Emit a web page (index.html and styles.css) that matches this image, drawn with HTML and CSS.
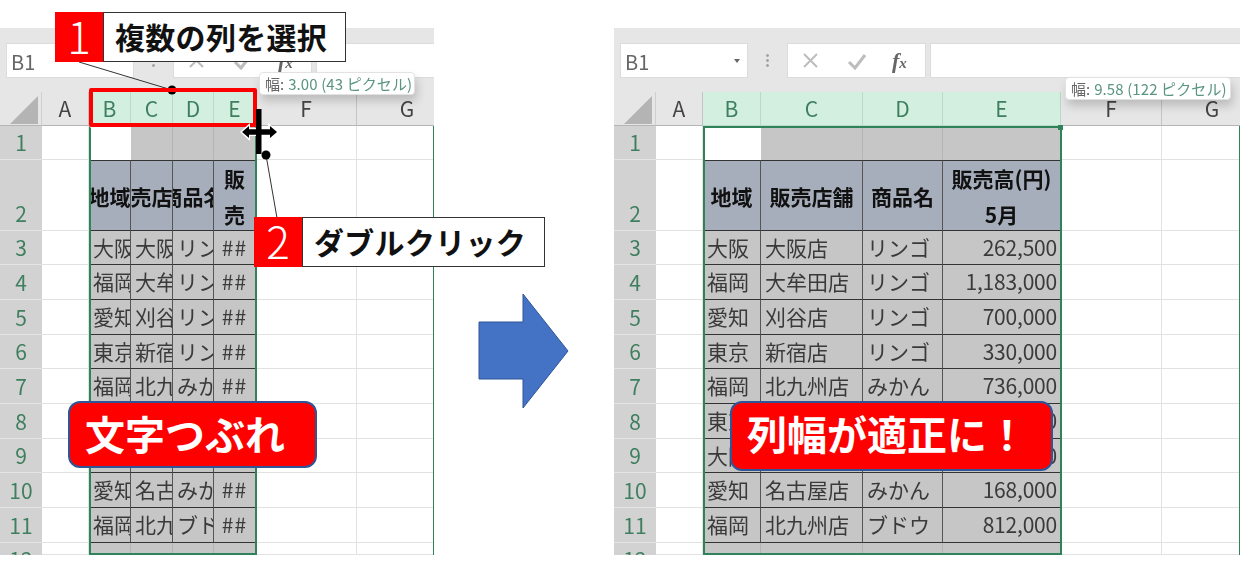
FILE: index.html
```html
<!DOCTYPE html>
<html lang="ja">
<head>
    <meta charset="UTF-8">
    <title>複数の列を選択してダブルクリック</title>
    <link rel="stylesheet" href="styles.css">
</head>
<body>

    <!-- before -->
    <div class="sheet sheet-a">
        <div class="toolbar">
            <div class="namebox">B1</div>
            <div class="kebab"></div>
            <div class="fxbox">
                <svg class="fxicon" width="22" height="22" viewBox="0 0 22 22"><path d="M4 4L17 17M17 4L4 17" stroke="#bdbdbd" stroke-width="2"/></svg>
                <svg class="fxicon" width="22" height="22" viewBox="0 0 22 22"><path d="M3 12L9 18L19 5" stroke="#bdbdbd" stroke-width="3" fill="none"/></svg>
                <span class="fx">f<small>x</small></span>
            </div>
            <div class="formula"></div>
        </div>
        <div class="grid">
            <div class="corner"><svg width="30" height="30" viewBox="0 0 30 30"><polygon points="0,29 28,29 28,1" fill="#b4b4b4"/></svg></div>
            <div class="col">A</div><div class="col on">B</div><div class="col on">C</div><div class="col on">D</div><div class="col on">E</div><div class="col">F</div><div class="col">G</div>

            <div class="row">1</div><div class="c"></div><div class="c active"></div><div class="c sel"></div><div class="c sel"></div><div class="c sel"></div><div class="c"></div><div class="c"></div>

            <div class="row">2</div><div class="c"></div><div class="td th">地域</div><div class="td th">販売店舗</div><div class="td th">商品名</div><div class="td th wrap">販売</div><div class="c"></div><div class="c"></div>

            <div class="row">3</div><div class="c"></div><div class="td">大阪</div><div class="td">大阪店</div><div class="td">リンゴ</div><div class="td num">##</div><div class="c"></div><div class="c"></div>
            <div class="row">4</div><div class="c"></div><div class="td">福岡</div><div class="td">大牟田店</div><div class="td">リンゴ</div><div class="td num">##</div><div class="c"></div><div class="c"></div>
            <div class="row">5</div><div class="c"></div><div class="td">愛知</div><div class="td">刈谷店</div><div class="td">リンゴ</div><div class="td num">##</div><div class="c"></div><div class="c"></div>
            <div class="row">6</div><div class="c"></div><div class="td">東京</div><div class="td">新宿店</div><div class="td">リンゴ</div><div class="td num">##</div><div class="c"></div><div class="c"></div>
            <div class="row">7</div><div class="c"></div><div class="td">福岡</div><div class="td">北九州店</div><div class="td">みかん</div><div class="td num">##</div><div class="c"></div><div class="c"></div>
            <div class="row">8</div><div class="c"></div><div class="td">東京</div><div class="td">新宿店</div><div class="td">みかん</div><div class="td num">##</div><div class="c"></div><div class="c"></div>
            <div class="row">9</div><div class="c"></div><div class="td">大阪</div><div class="td">大阪店</div><div class="td">みかん</div><div class="td num">##</div><div class="c"></div><div class="c"></div>
            <div class="row">10</div><div class="c"></div><div class="td">愛知</div><div class="td">名古屋店</div><div class="td">みかん</div><div class="td num">##</div><div class="c"></div><div class="c"></div>
            <div class="row">11</div><div class="c"></div><div class="td">福岡</div><div class="td">北九州店</div><div class="td">ブドウ</div><div class="td num">##</div><div class="c"></div><div class="c"></div>

            <div class="row cut">12</div><div class="c"></div><div class="c sel"></div><div class="c sel"></div><div class="c sel"></div><div class="c sel"></div><div class="c"></div><div class="c"></div>

            <div class="rowline"></div>
            <div class="selbox"></div>
        </div>
    </div>

    <!-- after -->
    <div class="sheet sheet-b">
        <div class="toolbar">
            <div class="namebox">B1<span class="caret"></span></div>
            <div class="kebab"></div>
            <div class="fxbox">
                <svg class="fxicon" width="22" height="22" viewBox="0 0 22 22"><path d="M4 4L17 17M17 4L4 17" stroke="#bdbdbd" stroke-width="2"/></svg>
                <svg class="fxicon" width="22" height="22" viewBox="0 0 22 22"><path d="M3 12L9 18L19 5" stroke="#bdbdbd" stroke-width="3" fill="none"/></svg>
                <span class="fx">f<small>x</small></span>
            </div>
            <div class="formula"></div>
        </div>
        <div class="grid">
            <div class="corner"><svg width="30" height="30" viewBox="0 0 30 30"><polygon points="0,29 28,29 28,1" fill="#b4b4b4"/></svg></div>
            <div class="col">A</div><div class="col on">B</div><div class="col on">C</div><div class="col on">D</div><div class="col on">E</div><div class="col">F</div><div class="col">G</div>

            <div class="row">1</div><div class="c"></div><div class="c active"></div><div class="c sel"></div><div class="c sel"></div><div class="c sel"></div><div class="c"></div><div class="c"></div>

            <div class="row">2</div><div class="c"></div><div class="td th">地域</div><div class="td th">販売店舗</div><div class="td th">商品名</div><div class="td th two">販売高(円)<br>5月</div><div class="c"></div><div class="c"></div>

            <div class="row">3</div><div class="c"></div><div class="td">大阪</div><div class="td">大阪店</div><div class="td">リンゴ</div><div class="td num">262,500</div><div class="c"></div><div class="c"></div>
            <div class="row">4</div><div class="c"></div><div class="td">福岡</div><div class="td">大牟田店</div><div class="td">リンゴ</div><div class="td num">1,183,000</div><div class="c"></div><div class="c"></div>
            <div class="row">5</div><div class="c"></div><div class="td">愛知</div><div class="td">刈谷店</div><div class="td">リンゴ</div><div class="td num">700,000</div><div class="c"></div><div class="c"></div>
            <div class="row">6</div><div class="c"></div><div class="td">東京</div><div class="td">新宿店</div><div class="td">リンゴ</div><div class="td num">330,000</div><div class="c"></div><div class="c"></div>
            <div class="row">7</div><div class="c"></div><div class="td">福岡</div><div class="td">北九州店</div><div class="td">みかん</div><div class="td num">736,000</div><div class="c"></div><div class="c"></div>
            <div class="row">8</div><div class="c"></div><div class="td">東京</div><div class="td">新宿店</div><div class="td">みかん</div><div class="td num">540,000</div><div class="c"></div><div class="c"></div>
            <div class="row">9</div><div class="c"></div><div class="td">大阪</div><div class="td">大阪店</div><div class="td">みかん</div><div class="td num">350,000</div><div class="c"></div><div class="c"></div>
            <div class="row">10</div><div class="c"></div><div class="td">愛知</div><div class="td">名古屋店</div><div class="td">みかん</div><div class="td num">168,000</div><div class="c"></div><div class="c"></div>
            <div class="row">11</div><div class="c"></div><div class="td">福岡</div><div class="td">北九州店</div><div class="td">ブドウ</div><div class="td num">812,000</div><div class="c"></div><div class="c"></div>

            <div class="row cut">12</div><div class="c"></div><div class="c sel"></div><div class="c sel"></div><div class="c sel"></div><div class="c sel"></div><div class="c"></div><div class="c"></div>

            <div class="rowline"></div>
            <div class="selbox"><span class="handle"></span></div>
        </div>
    </div>

    <!-- overlays -->
    <svg class="leaders" width="300" height="230" viewBox="0 0 300 230">
        <path d="M79 62L172 90M266 155L277 218" stroke="#333" stroke-width="1"/>
        <circle cx="172" cy="90" r="4.5" fill="#000"/>
        <circle cx="266" cy="155" r="4.5" fill="#000"/>
    </svg>

    <div class="redframe"></div>

    <svg class="cursor" width="40" height="48" viewBox="0 0 40 48">
        <path d="M0 23L10 14V19H16V27H10V32Z M39 23L28 14V19H21V27H28V32Z" fill="#fff"/>
        <path d="M2 23L9 17V20.250H16V25.750H9V29Z M37 23L30 17V20.250H21V25.750H30V29Z" fill="#000"/>
        <rect x="16" y="0" width="5.500" height="45" fill="#000"/>
    </svg>

    <div class="tip tip-a"><span>幅:</span><b>3.00 (43 ピクセル)</b></div>
    <div class="tip tip-b"><span>幅:</span><b>9.58 (122 ピクセル)</b></div>

    <div class="callout callout-1"><span class="badge">1</span><span class="label">複数の列を選択</span></div>
    <div class="callout callout-2"><span class="badge">2</span><span class="label">ダブルクリック</span></div>

    <div class="banner banner-a">文字つぶれ</div>
    <div class="banner banner-b">列幅が適正に！</div>

    <svg class="arrow" width="92" height="118" viewBox="0 0 92 118">
        <polygon points="1,30 45,30 45,2 90,59 45,116 45,87 1,87" fill="#4472c4" stroke="#2f5597" stroke-width="1"/>
    </svg>

</body>
</html>
```

FILE: styles.css
```css
* {
    box-sizing: border-box;
}
body {
    margin: 0;
    background: #fff;
    font-family: "Noto Sans CJK JP", "Noto Sans", sans-serif;
    width: 1240px;
    height: 562px;
    overflow: hidden;
    position: relative;
}

/* spreadsheet windows */
.sheet {
    position: absolute;
    top: 28px;
    height: 527px;
    background: #fff;
    display: flex;
    flex-direction: column;
    overflow: hidden;
    filter: blur(0.4px);
}
.sheet-a {
    left: 0;
    width: 434px;
}
.sheet-b {
    left: 614px;
    width: 626px;
}
.toolbar {
    height: 64px;
    flex: none;
    background: #e6e6e6;
    display: flex;
    align-items: flex-start;
    padding: 15px 0 0 6px;
}
.namebox {
    width: 128px;
    height: 35px;
    background: #fff;
    border: 1px solid #dcdcdc;
    color: #666;
    font-size: 20px;
    line-height: 36px;
    padding-left: 4px;
    position: relative;
}
.caret {
    position: absolute;
    right: 7px;
    top: 15px;
    border: 3px solid transparent;
    border-top: 4px solid #666;
}
.kebab {
    width: 39px;
    height: 15px;
    margin-top: 10px;
    background: radial-gradient(circle, #a5a5a5 1.2px, transparent 1.6px) center top / 39px 5px repeat-y;
}
.fxbox {
    width: 139px;
    height: 35px;
    background: #fff;
    border: 1px solid #dcdcdc;
    display: flex;
    align-items: center;
    gap: 24px;
    padding-left: 12px;
}
.fx {
    font-family: "Liberation Serif", serif;
    font-style: italic;
    font-weight: bold;
    font-size: 22px;
    line-height: 1;
    color: #666;
}
.fx small {
    font-size: 15px;
}
.formula {
    flex: 1;
    height: 35px;
    margin-left: 4px;
    background: #fff;
    border: 1px solid #dcdcdc;
    border-right: 0;
}

/* cell grid */
.grid {
    flex: 1;
    min-width: 0;
    overflow: hidden;
    position: relative;
    display: grid;
    grid-template-rows: 34px 34px 71px 34px 35px 35px 34px 35px 35px 34px 35px 35px 12px;
    font-size: 21px;
    color: #444;
}
.sheet-a .grid {
    grid-template-columns: 42px 47px 42px 42px 41px 42px 101px 101px;
}
.sheet-b .grid {
    grid-template-columns: 42px 47px 58px 102px 80px 118px 101px 101px;
}
.corner {
    background: #e6e6e6;
    padding: 3px 0 0 10px;
    border-right: 1px solid #cfcfcf;
    border-bottom: 1px solid #b5b5b5;
}
.corner svg {
    display: block;
}
.col {
    background: #e6e6e6;
    border-right: 1px solid #c4c4c4;
    border-bottom: 1px solid #b5b5b5;
    text-align: center;
    line-height: 33px;
    color: #444;
}
.col.on {
    background: #d2efdf;
    border-right-color: #bcd8c8;
    border-bottom-color: #bcd8c8;
    color: #3f7f5f;
}
.row {
    background: #d2d2d2;
    border-bottom: 1px solid #e4e4e4;
    color: #3f7f5f;
    line-height: 33px;
    display: flex;
    align-items: flex-end;
    justify-content: center;
    overflow: hidden;
}
.row.cut {
    align-items: flex-start;
    border-bottom: 0;
}
.c {
    border-right: 1px solid #e2e2e2;
    border-bottom: 1px solid #e2e2e2;
}
.c.sel {
    background: #c6c6c6;
    border-right-color: #b4b4b4;
    border-bottom-color: #c6c6c6;
}
.c.active {
    background: #fff;
    border-color: #fff;
}
.td {
    background: #c6c6c6;
    border-right: 1px solid #555;
    border-bottom: 1px solid #333;
    padding: 0 3px 2px 4px;
    display: flex;
    align-items: center;
    white-space: nowrap;
    overflow: hidden;
    color: #3a3a3a;
}
.td.th {
    background: #a6adbb;
    border-top: 1px solid #333;
    color: #111;
    font-weight: bold;
    justify-content: center;
    padding: 0;
}
.td.num {
    justify-content: flex-end;
    letter-spacing: -0.2px;
}
.sheet-a .td {
    padding-right: 0;
}
.sheet-a .td.num {
    justify-content: center;
    padding-left: 0;
    letter-spacing: 1px;
}
.td.wrap {
    white-space: normal;
    word-break: break-all;
    line-height: 36px;
    padding: 0 10px;
    text-align: center;
}
.td.two {
    white-space: normal;
    text-align: center;
    line-height: 36px;
}

/* selection outlines, placed on the grid tracks but over the cells */
.rowline {
    position: absolute;
    grid-column: 1;
    grid-row: 2 / 14;
    top: 0;
    bottom: 0;
    right: -1px;
    width: 2px;
    background: #2f8358;
}
.selbox {
    position: absolute;
    grid-column: 3 / 7;
    grid-row: 2 / 14;
    top: 0;
    bottom: 0;
    left: 0;
    right: -1px;
    border: 2px solid #2f8358;
}
.sheet-a .selbox {
    border-top-color: transparent;
}
.handle {
    position: absolute;
    right: -3px;
    top: -3px;
    width: 5px;
    height: 5px;
    background: #2f8358;
}

/* overlays */
.leaders {
    position: absolute;
    left: 0;
    top: 0;
}
.redframe {
    position: absolute;
    left: 89px;
    top: 88px;
    width: 168px;
    height: 39px;
    border: 4px solid #ff0000;
    border-radius: 2px;
}
.cursor {
    position: absolute;
    left: 240px;
    top: 109px;
}
.tip {
    position: absolute;
    height: 23px;
    background: #fff;
    border: 1px solid #e2e2e2;
    border-radius: 4px;
    box-shadow: 2px 6px 10px rgba(0, 0, 0, 0.18);
    font-size: 15px;
    line-height: 21px;
    padding-left: 5px;
    color: #666;
    white-space: nowrap;
    overflow: hidden;
    display: flex;
    gap: 4px;
    filter: blur(0.3px);
}
.tip b {
    font-weight: normal;
    color: #5a9482;
    letter-spacing: 0.1px;
}
.tip-a {
    left: 259px;
    top: 72px;
    width: 156px;
}
.tip-b {
    left: 1065px;
    top: 77px;
    width: 166px;
}
.callout {
    position: absolute;
    display: flex;
    height: 50px;
}
.callout-1 {
    left: 55px;
    top: 12px;
}
.callout-2 {
    left: 254px;
    top: 217px;
}
.badge {
    width: 48px;
    background: #ff0000;
    color: #fff;
    font-size: 44px;
    font-weight: 300;
    text-align: center;
    line-height: 46px;
}
.label {
    width: 243px;
    background: #fff;
    border: 1px solid #333;
    color: #111;
    font-size: 30px;
    font-weight: bold;
    letter-spacing: 0.3px;
    line-height: 46px;
    padding-left: 11px;
    white-space: nowrap;
}
.banner {
    position: absolute;
    top: 401px;
    height: 67px;
    background: #ff0000;
    border: 2px solid #2f5597;
    border-radius: 12px;
    color: #fff;
    font-size: 40px;
    font-weight: bold;
    line-height: 60px;
    padding-left: 15px;
    white-space: nowrap;
}
.banner-a {
    left: 68px;
    width: 249px;
}
.banner-b {
    left: 730px;
    width: 323px;
    height: 70px;
}
.arrow {
    position: absolute;
    left: 478px;
    top: 292px;
}
```
